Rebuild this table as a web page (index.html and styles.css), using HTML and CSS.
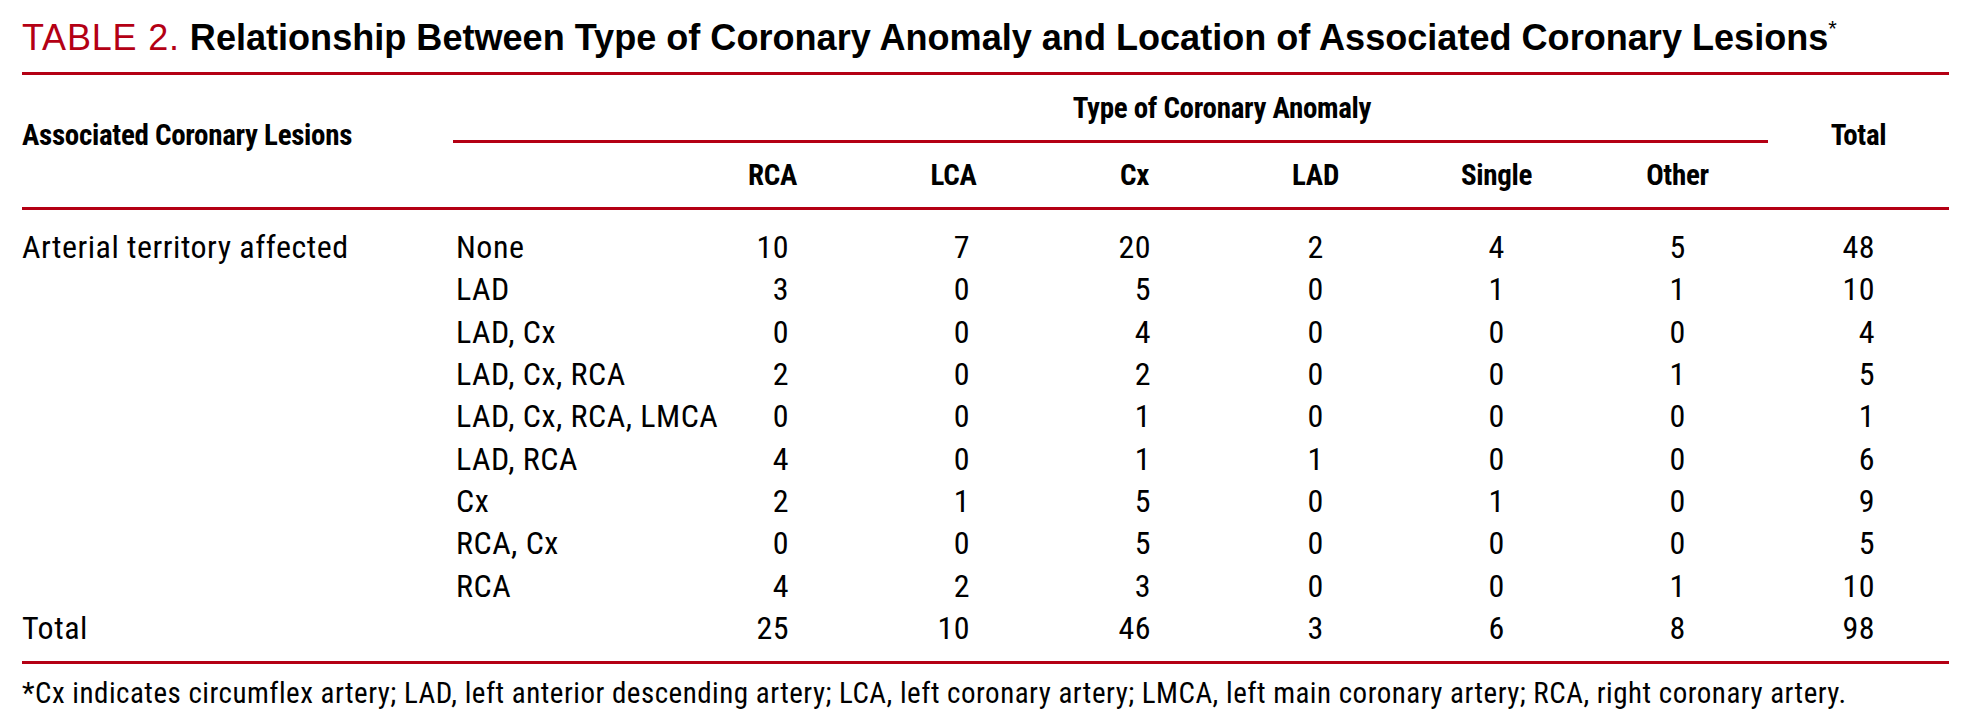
FILE: index.html
```html
<!DOCTYPE html>
<html lang="en">
<head>
<meta charset="utf-8">
<title>Table 2</title>
<link rel="stylesheet" href="styles.css">
</head>
<body>
<div class="fig">
  <h1 class="caption"><span class="label">TABLE 2.</span> <span class="title">Relationship Between Type of Coronary Anomaly and Location of Associated Coronary Lesions</span><sup>*</sup></h1>

  <div class="thead">
    <div class="h-lesions">Associated Coronary Lesions</div>
    <div class="h-type">Type of Coronary Anomaly</div>
    <div class="h-total">Total</div>
    <div class="h-rule"></div>
    <div class="h-col c3">RCA</div>
    <div class="h-col c4">LCA</div>
    <div class="h-col c5">Cx</div>
    <div class="h-col c6">LAD</div>
    <div class="h-col c7">Single</div>
    <div class="h-col c8">Other</div>
  </div>

  <div class="tbody">
    <div class="row"><div>Arterial territory affected</div><div>None</div><div>10</div><div>7</div><div>20</div><div>2</div><div>4</div><div>5</div><div>48</div></div>
    <div class="row"><div></div><div>LAD</div><div>3</div><div>0</div><div>5</div><div>0</div><div>1</div><div>1</div><div>10</div></div>
    <div class="row"><div></div><div>LAD, Cx</div><div>0</div><div>0</div><div>4</div><div>0</div><div>0</div><div>0</div><div>4</div></div>
    <div class="row"><div></div><div>LAD, Cx, RCA</div><div>2</div><div>0</div><div>2</div><div>0</div><div>0</div><div>1</div><div>5</div></div>
    <div class="row"><div></div><div>LAD, Cx, RCA, LMCA</div><div>0</div><div>0</div><div>1</div><div>0</div><div>0</div><div>0</div><div>1</div></div>
    <div class="row"><div></div><div>LAD, RCA</div><div>4</div><div>0</div><div>1</div><div>1</div><div>0</div><div>0</div><div>6</div></div>
    <div class="row"><div></div><div>Cx</div><div>2</div><div>1</div><div>5</div><div>0</div><div>1</div><div>0</div><div>9</div></div>
    <div class="row"><div></div><div>RCA, Cx</div><div>0</div><div>0</div><div>5</div><div>0</div><div>0</div><div>0</div><div>5</div></div>
    <div class="row"><div></div><div>RCA</div><div>4</div><div>2</div><div>3</div><div>0</div><div>0</div><div>1</div><div>10</div></div>
    <div class="row"><div>Total</div><div></div><div>25</div><div>10</div><div>46</div><div>3</div><div>6</div><div>8</div><div>98</div></div>
  </div>

  <p class="note">*Cx indicates circumflex artery; LAD, left anterior descending artery; LCA, left coronary artery; LMCA, left main coronary artery; RCA, right coronary artery.</p>
</div>
</body>
</html>
```

FILE: styles.css
```css
:root {
  --red: #b40014;
  --cols: 431px 229px repeat(7, 181px);
  --ls: 0.5px;
}

body {
  margin: 0;
  background: #fff;
  color: #000;
}

.fig {
  width: 1927px;
  padding: 18px 0 0 22px;
  font-family: "Roboto Condensed", "Liberation Sans", Arial, sans-serif;
}

.caption {
  margin: 0;
  padding-bottom: 14px;
  border-bottom: 3px solid var(--red);
  font-family: "Liberation Sans", Arial, sans-serif;
  font-size: 36px;
  line-height: 40px;
  font-weight: normal;
  white-space: nowrap;
}

.caption .label {
  color: var(--red);
  letter-spacing: 0.8px;
}

.caption .title {
  font-weight: bold;
  font-size: 36.1px;
}

.caption sup {
  font-size: 22px;
  line-height: 1;
  vertical-align: top;
}

.thead {
  display: grid;
  grid-template-columns: var(--cols);
  grid-template-rows: 65px 3px 64px;
  border-bottom: 3px solid var(--red);
  font-size: 29px;
  line-height: 34px;
  letter-spacing: -0.3px;
  font-weight: bold;
}

.h-lesions {
  grid-column: 1;
  grid-row: 1 / 4;
  align-self: center;
  padding-bottom: 12px;
}

.h-type {
  grid-column: 3 / 9;
  grid-row: 1;
  align-self: center;
  text-align: center;
  padding-right: 6px;
}

.h-total {
  grid-column: 9;
  grid-row: 1 / 4;
  align-self: center;
  text-align: center;
  padding-bottom: 12px;
}

.h-rule {
  grid-column: 2 / 9;
  grid-row: 2;
  background: var(--red);
}

.h-col {
  grid-row: 3;
  align-self: center;
  text-align: center;
}

.c3 { grid-column: 3; }
.c4 { grid-column: 4; }
.c5 { grid-column: 5; }
.c6 { grid-column: 6; }
.c7 { grid-column: 7; }
.c8 { grid-column: 8; }

.tbody {
  display: grid;
  grid-template-columns: var(--cols);
  grid-auto-rows: 42.33px;
  padding: 16px 0 12px;
  border-bottom: 3px solid var(--red);
  font-size: 32px;
  line-height: 42.33px;
  letter-spacing: var(--ls);
}

.row {
  display: contents;
}

.row > div {
  white-space: nowrap;
}

.row > :nth-child(2) {
  padding-left: 3px;
}

.row > :nth-child(n+3) {
  text-align: right;
  padding-right: calc(50% - 1ch - 1.5 * var(--ls));
}

.row > :nth-child(6),
.row > :nth-child(7),
.row > :nth-child(8) {
  padding-right: calc(50% - 0.5ch - var(--ls));
}

.note {
  margin: 0;
  padding-top: 9px;
  font-size: 29px;
  line-height: 40px;
  letter-spacing: var(--ls);
  white-space: nowrap;
}
```
